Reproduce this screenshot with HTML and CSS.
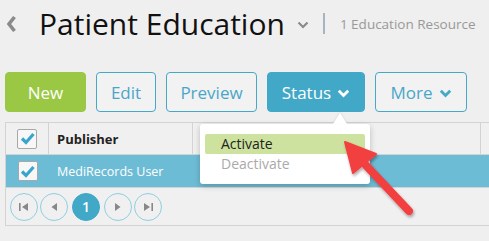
FILE: index.html
```html
<!DOCTYPE html>
<html>
<head>
<meta charset="utf-8">
<link rel="stylesheet" href="styles.css">
</head>
<body>
<div class="page">
  <header class="head">
    <svg class="back" width="11" height="18" viewBox="0 0 11 18"><path d="M8.5 2 L3 9 L8.5 16" fill="none" stroke="#8a8a8a" stroke-width="3.6"/></svg>
    <h1 class="title">Patient Education</h1>
    <svg class="title-caret" width="12" height="8" viewBox="0 0 12 8"><path d="M1.5 1.5 L6 6 L10.5 1.5" fill="none" stroke="#8a8a8a" stroke-width="2.2"/></svg>
    <span class="sep"></span>
    <span class="count">1 Education Resource</span>
  </header>

  <div class="toolbar">
    <button class="btn btn-new">New</button>
    <button class="btn btn-outline btn-edit">Edit</button>
    <button class="btn btn-outline btn-preview">Preview</button>
    <button class="btn btn-status">Status <svg width="13" height="9" viewBox="0 0 13 9"><path d="M1.8 1.8 L6.5 6.5 L11.2 1.8" fill="none" stroke="#fff" stroke-width="2.8"/></svg></button>
    <button class="btn btn-outline btn-more">More <svg width="13" height="9" viewBox="0 0 13 9"><path d="M1.8 1.8 L6.5 6.5 L11.2 1.8" fill="none" stroke="#44a8c8" stroke-width="2.8"/></svg></button>
  </div>

  <div class="grid">
    <div class="row row-head">
      <div class="cell cell-check"><span class="cb"><svg width="15" height="13" viewBox="0 0 15 13"><path d="M2 6.5 L6 10.5 L13.5 2" fill="none" stroke="#3aa5cc" stroke-width="3.2"/></svg></span></div>
      <div class="cell cell-pub">Publisher</div>
      <div class="cell cell-mid"></div>
      <div class="cell cell-rest"></div>
    </div>
    <div class="row row-sel">
      <div class="cell cell-check"><span class="cb"><svg width="15" height="13" viewBox="0 0 15 13"><path d="M2 6.5 L6 10.5 L13.5 2" fill="none" stroke="#3aa5cc" stroke-width="3.2"/></svg></span></div>
      <div class="cell cell-pub">MediRecords User</div>
      <div class="cell cell-mid"></div>
      <div class="cell cell-rest"></div>
    </div>
    <div class="pager">
      <span class="pg"><svg width="12" height="10" viewBox="0 0 12 10"><rect x="1" y="1" width="1.6" height="8" fill="#888"/><path d="M10 1 L4 5 L10 9 Z" fill="#888"/></svg></span>
      <span class="pg"><svg width="10" height="10" viewBox="0 0 10 10"><path d="M8 1 L2.5 5 L8 9 Z" fill="#888"/></svg></span>
      <span class="pg pg-active">1</span>
      <span class="pg"><svg width="10" height="10" viewBox="0 0 10 10"><path d="M2 1 L7.5 5 L2 9 Z" fill="#888"/></svg></span>
      <span class="pg"><svg width="12" height="10" viewBox="0 0 12 10"><path d="M2 1 L8 5 L2 9 Z" fill="#888"/><rect x="9.4" y="1" width="1.6" height="8" fill="#888"/></svg></span>
    </div>
  </div>

  <div class="menu">
    <div class="menu-item active">Activate</div>
    <div class="menu-item disabled">Deactivate</div>
  </div>

  <svg class="annot" width="489" height="241" viewBox="0 0 489 241">
    <defs>
      <filter id="sh" x="-20%" y="-20%" width="140%" height="140%">
        <feDropShadow dx="1" dy="2" stdDeviation="1.6" flood-color="#000" flood-opacity="0.35"/>
      </filter>
    </defs>
    <g filter="url(#sh)" fill="#f2403f" stroke="#f2403f">
      <line x1="409" y1="211" x2="360" y2="159" stroke-width="8" stroke-linecap="round"/>
      <polygon points="345,142 376,154 353,173" stroke-width="2" stroke-linejoin="round"/>
    </g>
  </svg>
</div>
</body>
</html>
```

FILE: styles.css
```css
* { box-sizing: border-box; }
html, body {
  margin: 0;
  padding: 0;
  overflow: hidden;
}
body {
  background: #efefef;
  font-family: "Open Sans", "Noto Sans", sans-serif;
  color: #222;
}
.page {
  position: relative;
  width: 489px;
  height: 241px;
  overflow: hidden;
}
.head {
  display: flex;
  align-items: center;
  height: 50px;
  padding: 0 0 0 6px;
}
.back { margin-right: 22px; margin-top: -2px; }
.title {
  margin: 0;
  font-size: 30px;
  font-weight: 400;
  line-height: 40px;
  color: #111;
  margin-top: -2px;
}
.title-caret { margin-left: 12px; }
.sep {
  width: 2px;
  height: 21px;
  background: #a9b4bf;
  margin: -3px 15px 0 14px;
}
.count {
  font-size: 13.5px;
  color: #999;
  margin-top: -2px;
}
.toolbar {
  display: flex;
  gap: 10px;
  padding: 0 0 0 5px;
  margin-top: 22px;
}
.btn {
  height: 40px;
  border-radius: 4px;
  font-family: inherit;
  font-size: 17px;
  padding: 0;
  display: flex;
  align-items: center;
  justify-content: center;
  gap: 6px;
  cursor: pointer;
}
.btn-new {
  width: 81px;
  background: #9bc844;
  border: 1px solid #9bc844;
  color: #fff;
}
.btn-outline {
  background: #f2f2f2;
  border: 1px solid #44a8c8;
  color: #4aa6c9;
}
.btn-edit { width: 60px; }
.btn-preview { width: 91px; }
.btn-status {
  width: 98px;
  background: #42a8c8;
  border: 1px solid #42a8c8;
  color: #fff;
}
.btn-more { width: 92px; }
.btn svg { margin-top: 2px; }

.grid {
  margin: 10px 0 0 5px;
  width: 520px;
  border: 1px solid #d3d3d3;
  border-right: none;
  background: #f0f0f0;
}
.row {
  display: flex;
  height: 32px;
  border-bottom: 1px solid #d3d3d3;
}
.row-sel {
  background: #6dbcd6;
  color: #fff;
  height: 33px;
}
.cell {
  display: flex;
  align-items: center;
  font-size: 13px;
}
.row-sel .cell { font-size: 12.5px; }
.cell-check {
  width: 43px;
  justify-content: center;
  border-right: 1px solid #d3d3d3;
}
.cell-pub {
  width: 144px;
  padding-left: 8px;
  border-right: 1px solid #d3d3d3;
}
.cell-mid {
  width: 288px;
  border-right: 1px solid #d3d3d3;
}
.row-sel .cell { border-right: none; }
.row-head .cell-pub { font-weight: 700; color: #222; }
.cell-rest { flex: 1; }
.cb {
  width: 20px;
  height: 20px;
  border: 1px solid #a8a8a8;
  background: #f7f7f7;
  border-radius: 2px;
  display: flex;
  align-items: center;
  justify-content: center;
}
.pager {
  display: flex;
  align-items: center;
  gap: 2px;
  height: 37px;
  padding-left: 4px;
}
.pg {
  width: 28px;
  height: 28px;
  border-radius: 50%;
  border: 1px solid #8fcee2;
  display: flex;
  align-items: center;
  justify-content: center;
}
.pg-active {
  background: #42a8c8;
  border-color: #42a8c8;
  color: #fff;
  font-size: 14px;
  font-weight: 600;
  margin: 0 2px;
}

.menu {
  position: absolute;
  left: 200px;
  top: 124px;
  width: 170px;
  height: 60px;
  background: #fff;
  border-radius: 3px;
  box-shadow: 0 2px 6px rgba(0,0,0,0.22);
  padding: 10px 5px 0 5px;
}
.menu::before {
  content: "";
  position: absolute;
  left: 133px;
  top: -11px;
  border-left: 7px solid transparent;
  border-right: 7px solid transparent;
  border-bottom: 11px solid #fff;
  filter: drop-shadow(0 -1px 1px rgba(0,0,0,0.08));
}
.menu-item {
  height: 20px;
  line-height: 20px;
  font-size: 14px;
  padding-left: 16px;
  border-radius: 2px;
}
.menu-item.active {
  background: #cde29f;
  color: #222;
}
.menu-item.disabled { color: #aaa; }

.annot {
  position: absolute;
  left: 0;
  top: 0;
  pointer-events: none;
}
```
